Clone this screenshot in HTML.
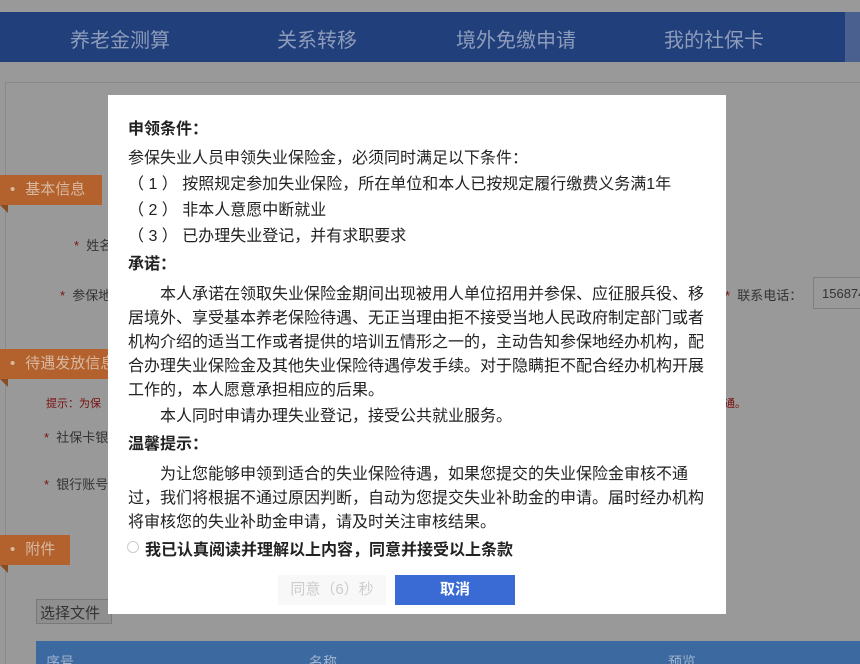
<!DOCTYPE html>
<html><head><meta charset="utf-8"><style>
*{margin:0;padding:0;box-sizing:border-box}
html,body{width:860px;height:664px;overflow:hidden}
body{background:#999;font-family:"Liberation Sans","Noto Sans CJK SC",sans-serif;position:relative}
.a{position:absolute;white-space:nowrap}
.nav{left:0;top:12px;width:860px;height:50px;background:#213f7b}
.nav span{position:absolute;top:12px;font-size:20px;color:#8d9cbb}
.frame{left:5px;top:82px;width:855px;height:582px;border-left:1px solid #8a8a8a;border-top:1px solid #8a8a8a}
.tag{background:#b3622e;color:#d8b9a3;font-size:15px;height:30px;line-height:30px;padding-left:10px}
.tag:before{content:"•";margin-right:10px}
.tag:after{content:"";position:absolute;left:0;top:30px;border-top:8px solid #8a4a22;border-left:8px solid transparent}
.lbl{font-size:13px;color:#333}
.star{color:#7a1010}
.m{left:108px;top:95px;width:618px;height:519px;background:#fff}
.t{position:absolute;left:20px;font-size:16px;color:#222;white-space:nowrap;margin-top:-2px}
.b{font-weight:bold}
</style></head><body>
<div class="a nav"><span style="left:70px">养老金测算</span><span style="left:277px">关系转移</span><span style="left:456px">境外免缴申请</span><span style="left:664px">我的社保卡</span><span style="left:850px">失</span></div>
<div class="a" style="left:845px;top:12px;width:15px;height:50px;background:#4a6190"></div>
<div class="a frame"></div>
<div class="a tag" style="left:0;top:175px;width:102px">基本信息</div>
<div class="a tag" style="left:0;top:349px;width:110px">待遇发放信息</div>
<div class="a tag" style="left:0;top:535px;width:70px">附件</div>
<div class="a lbl" style="left:74px;top:235px"><span class="star">*</span>&nbsp; 姓名</div>
<div class="a lbl" style="left:60px;top:285px"><span class="star">*</span>&nbsp; 参保地</div>
<div class="a" style="left:46px;top:395px;font-size:11px;color:#7a1010">提示：为保</div>
<div class="a" style="left:724px;top:395px;font-size:11px;color:#7a1010">通。</div>
<div class="a lbl" style="left:44px;top:427px"><span class="star">*</span>&nbsp; 社保卡银</div>
<div class="a lbl" style="left:44px;top:474px"><span class="star">*</span>&nbsp; 银行账号</div>
<div class="a lbl" style="left:725px;top:285px;font-size:13px"><span class="star">*</span>&nbsp; 联系电话：</div>
<div class="a" style="left:813px;top:277px;width:60px;height:32px;border:1px solid #7f7f7f;font-size:13px;color:#333;padding:8px 0 0 8px">156874</div>
<div class="a" style="left:36px;top:599px;width:76px;height:25px;background:#8f8f8f;border:1px solid #7a7a7a;font-size:15px;color:#333;padding:2px 3px">选择文件</div>
<div class="a" style="left:36px;top:641px;width:830px;height:30px;background:#3c6aa0;color:#9fb3cc;font-size:14px"><span style="position:absolute;left:10px;top:11px">序号</span><span style="position:absolute;left:273px;top:11px">名称</span><span style="position:absolute;left:632px;top:11px">预览</span></div>

<div class="a m">
<div class="t b" style="top:22px">申领条件：</div>
<div class="t" style="top:51px">参保失业人员申领失业保险金，必须同时满足以下条件：</div>
<div class="t" style="top:77px">（ 1 ） 按照规定参加失业保险，所在单位和本人已按规定履行缴费义务满1年</div>
<div class="t" style="top:103px">（ 2 ） 非本人意愿中断就业</div>
<div class="t" style="top:129px">（ 3 ） 已办理失业登记，并有求职要求</div>
<div class="t b" style="top:157px">承诺：</div>
<div class="t" style="top:187px">　　本人承诺在领取失业保险金期间出现被用人单位招用并参保、应征服兵役、移</div>
<div class="t" style="top:211px">居境外、享受基本养老保险待遇、无正当理由拒不接受当地人民政府制定部门或者</div>
<div class="t" style="top:235px">机构介绍的适当工作或者提供的培训五情形之一的，主动告知参保地经办机构，配</div>
<div class="t" style="top:259px">合办理失业保险金及其他失业保险待遇停发手续。对于隐瞒拒不配合经办机构开展</div>
<div class="t" style="top:283px">工作的，本人愿意承担相应的后果。</div>
<div class="t" style="top:309px">　　本人同时申请办理失业登记，接受公共就业服务。</div>
<div class="t b" style="top:337px">温馨提示：</div>
<div class="t" style="top:367px">　　为让您能够申领到适合的失业保险待遇，如果您提交的失业保险金审核不通</div>
<div class="t" style="top:391px">过，我们将根据不通过原因判断，自动为您提交失业补助金的申请。届时经办机构</div>
<div class="t" style="top:415px">将审核您的失业补助金申请，请及时关注审核结果。</div>
<div class="a" style="left:19px;top:446px;width:12px;height:12px;border:1px solid #ccc;border-radius:50%"></div>
<div class="t b" style="left:37px;top:443px;font-size:16px">我已认真阅读并理解以上内容，同意并接受以上条款</div>
<div class="a" style="left:170px;top:480px;width:108px;height:30px;background:#f8f8f8;color:#ccc;font-size:15px;text-align:center;line-height:30px">同意（6）秒</div>
<div class="a" style="left:287px;top:480px;width:120px;height:30px;background:#3a6bd4;color:#fff;font-size:15px;font-weight:bold;text-align:center;line-height:30px">取消</div>
</div>
</body></html>
